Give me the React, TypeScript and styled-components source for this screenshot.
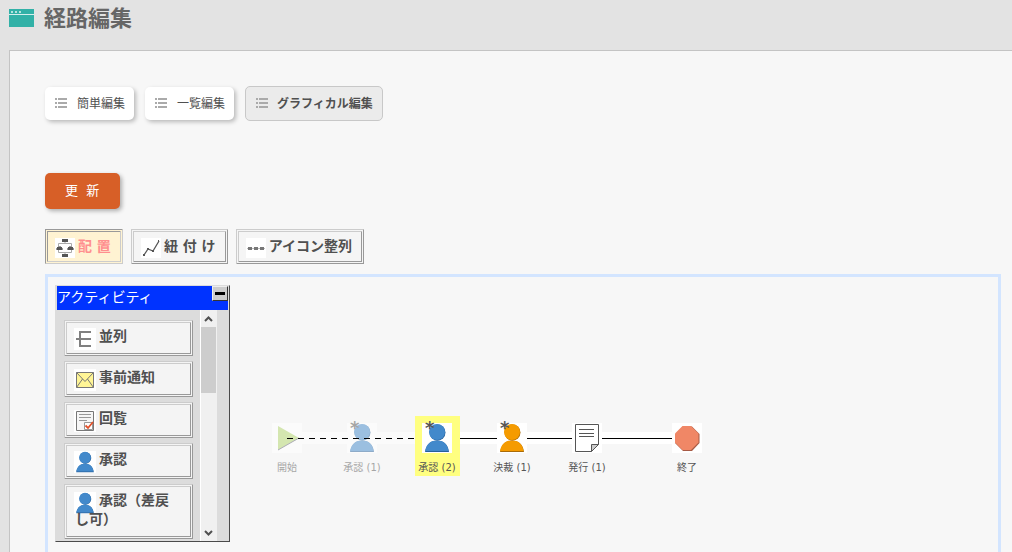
import React from 'react';
import styled, { createGlobalStyle, css } from 'styled-components';

const GlobalStyle = createGlobalStyle`
  * { box-sizing: border-box; }
  body {
    margin: 0;
    background: #e3e3e3;
    color: #505050;
    font-family: 'DejaVu Sans', 'Noto Sans CJK JP', sans-serif;
  }
  button { font-family: inherit; color: inherit; margin: 0; cursor: pointer; }
  svg { display: block; }
`;

const Page = styled.div`
  height: 100vh;
  overflow: hidden;
  display: flex;
  flex-direction: column;
`;

const Header = styled.header`
  display: flex;
  align-items: flex-start;
  gap: 10px;
  height: 50px;
  flex: none;
  padding: 3px 9px 0;
  svg { margin-top: 6px; flex: none; }
`;

const Title = styled.h1`
  margin: 0;
  font-size: 22px;
  line-height: 32px;
  font-weight: bold;
  color: #666;
`;

const Panel = styled.main`
  flex: 1;
  margin-left: 9px;
  padding: 35px 11px 0 35px;
  background: #f7f7f7;
  border: 1px solid #c4c4c4;
  border-width: 1px 0 0 1px;
`;

const Tabs = styled.nav`
  display: flex;
  align-items: center;
  gap: 11px;
  margin-bottom: 52px;
`;

const Tab = styled.button<{ $current?: boolean }>`
  display: flex;
  align-items: center;
  gap: 10px;
  height: 33px;
  padding: 0 9px 0 10px;
  border: 0;
  border-radius: 5px;
  background: #fff;
  box-shadow: 2px 2px 4px rgba(0, 0, 0, 0.25);
  font-size: 12px;
  line-height: 18px;
  ${(p) => p.$current && css`
    height: 35px;
    gap: 9px;
    border: 1px solid #c8c8c8;
    background: #ebebeb;
    box-shadow: none;
    font-weight: bold;
  `}
`;

const UpdateButton = styled.button`
  display: block;
  height: 36px;
  padding: 0 21px 0 20px;
  border: 0;
  border-radius: 5px;
  background: #d75f27;
  color: #fff;
  box-shadow: 2px 2px 4px rgba(0, 0, 0, 0.3);
  font-size: 13px;
  line-height: 20px;
  white-space: pre;
`;

const Toolbar = styled.div`
  display: flex;
  gap: 8px;
  margin: 20px 0 10px;
`;

const ToolButton = styled.button<{ $pressed?: boolean }>`
  display: flex;
  align-items: center;
  gap: 3px;
  height: 35px;
  padding: 0 9px 2px 7px;
  border: 3px double;
  border-color: ${(p) => (p.$pressed ? '#999 #ccc #ccc #999' : '#ccc #999 #999 #ccc')};
  background: ${(p) => (p.$pressed ? '#fff3d2' : '#f5f5f5')};
  color: ${(p) => (p.$pressed ? '#ff8f8f' : '#505050')};
  font-size: 14px;
  line-height: 20px;
  font-weight: bold;
  svg { background: #fff; margin-top: 4px; }
`;

const Canvas = styled.section`
  position: relative;
  min-height: 400px;
  border: 3px solid #d3e5ff;
`;

const Palette = styled.aside`
  position: absolute;
  left: 7px;
  top: 8px;
  width: 175px;
  border: 1px solid;
  border-color: #dcdcdc #4a4a4a #4a4a4a #dcdcdc;
  background: #dcdcdc;
`;

const PaletteBar = styled.div`
  display: flex;
  justify-content: space-between;
  align-items: flex-start;
  height: 24px;
  margin: 0 1px;
  background: #03f;
  color: #fff;
  font-size: 14px;
  line-height: 22px;
`;

const Minimize = styled.button`
  display: flex;
  align-items: center;
  justify-content: center;
  width: 16px;
  height: 15px;
  padding: 0;
  border: 1px solid;
  border-color: #eee #333 #333 #eee;
  background: #ccc;
  &::before { content: ''; width: 10px; height: 3px; background: #000; }
`;

const PaletteBody = styled.div`
  display: flex;
  padding: 0 12px 0 8px;
`;

const PaletteItems = styled.div`
  display: flex;
  flex-direction: column;
  gap: 5px;
  flex: 1;
  padding: 10px 7px 2px 0;
`;

const PaletteItem = styled.button`
  position: relative;
  padding: 4px 8px 7px;
  border: 3px double;
  border-color: #ccc #999 #999 #ccc;
  background: #f4f4f4;
  font-size: 14px;
  line-height: 19px;
  font-weight: bold;
  text-align: left;
  svg { position: absolute; left: 7px; top: 5px; background: #fff; }
  span { position: relative; display: block; text-indent: 24px; }
`;

const ScrollBar = styled.div`
  display: flex;
  flex-direction: column;
  width: 17px;
  background: #f0f0f0;
  border-left: 1px solid #fff;
`;

const ScrollArrow = styled.button`
  width: 16px;
  height: 17px;
  padding: 0;
  border: 0;
  background: #f0f0f0;
`;

const ScrollThumb = styled.div`
  width: 15px;
  height: 66px;
  margin-bottom: auto;
  background: #cdcdcd;
`;

const Flow = styled.svg`
  position: absolute;
  left: 239px;
  top: 155px;
`;

const Node = styled.div<{ $x: number; $selected?: boolean; $done?: boolean }>`
  position: absolute;
  left: ${(p) => p.$x}px;
  top: 139px;
  width: 45px;
  height: 60px;
  padding: 7px 1px 0 0;
  display: flex;
  flex-direction: column;
  align-items: center;
  gap: 7px;
  font-size: 10px;
  line-height: 16px;
  color: #555;
  white-space: nowrap;
  background: ${(p) => (p.$selected ? '#ffff80' : 'transparent')};
  opacity: ${(p) => (p.$done ? 0.5 : 1)};
  svg { background: #fff; flex: none; }
`;

const Mark = styled.span`
  position: absolute;
  left: 10px;
  top: 2px;
  font-size: 18px;
  font-weight: bold;
  line-height: 20px;
  color: #555;
`;

const ListIcon = () => (
  <svg width="12" height="11" viewBox="0 0 12 11" fill="#aaa">
    <path d="M0 0h2v2H0zM3 0h9v2H3zM0 4h2v2H0zM3 4h9v2H3zM0 8h2v2H0zM3 8h9v2H3z" />
  </svg>
);

const WindowIcon = () => (
  <svg width="25" height="18" viewBox="0 0 25 18">
    <path d="M0 0h25v18H0z" fill="#32b1a7" />
    <path d="M0 5h25v1H0z" fill="#d5efed" />
    <path d="M2 2h2v2H2zM6 2h2v2H6zM10 2h2v2h-2z" fill="#b5e2de" />
  </svg>
);

const PlaceIcon = () => (
  <svg width="20" height="20" viewBox="0 0 20 20">
    <path d="M3.500 8V5.500h13V8M3.500 12v2.500h13V12M10 4v2M10 14v2" fill="none" stroke="#aaa" />
    <path d="M7 1h6v3H7zM7 16h6v3H7zM2 9h5v3H2zM13 9h5v3h-5z" fill="#555" />
    <path d="M1 10h1v2H1zM7 10h1v2H7zM12 10h1v2h-1zM18 10h1v2h-1zM3 8h3v1H3zM14 8h3v1h-3z" fill="#999" />
  </svg>
);

const LinkIcon = () => (
  <svg width="20" height="20" viewBox="0 0 20 20" fill="none" stroke="#555" strokeWidth="1.300">
    <path d="M3 17l4-6 5 2 6-10" />
    <path d="M2 16h2v2H2zM6 10h2v2H6zM11 12h2v2h-2zM17 2h1v2h-1z" fill="#555" stroke="none" />
  </svg>
);

const AlignIcon = () => (
  <svg width="20" height="20" viewBox="0 0 20 20">
    <path d="M1 10.500h18" stroke="#bbb" />
    <path d="M2 9h4v3H2zM8 9h4v3H8zM14 9h4v3h-4z" fill="#777" />
  </svg>
);

const ParallelIcon = () => (
  <svg width="22" height="22" viewBox="0 0 22 22" fill="none" stroke="#808080" strokeWidth="2">
    <path d="M17 4H6v14h11M2 11h15" />
  </svg>
);

const MailIcon = () => (
  <svg width="22" height="22" viewBox="0 0 22 22" fill="#fff596" stroke="#777">
    <path d="M2.500 3.500h17v15h-17z" />
    <path d="M2.500 3.500l8.500 9 8.500-9M2.500 18.500l6-8.500M19.500 18.500l-6-8.500" fill="none" />
  </svg>
);

const CirculateIcon = () => (
  <svg width="22" height="22" viewBox="0 0 22 22" fill="none">
    <path d="M2.500 1.500h17v19h-17z" fill="#f6f6f6" stroke="#777" />
    <path d="M5 4.500h12M5 7.500h12M5 10.500h8" stroke="#999" />
    <path d="M10.500 12.500h8v7h-8z" fill="#fff" stroke="#999" />
    <path d="M11.500 15.500l2.500 2.500 5-6" stroke="#e2512a" strokeWidth="1.800" />
  </svg>
);

const PersonIcon = ({ size, color, edge }: { size: number; color: string; edge: string }) => (
  <svg width={size} height={size} viewBox="0 0 30 30">
    <path d="M3 29C4.500 21 9 17.500 15 17.500S26 21 27 29z" fill={edge} />
    <path d="M3 28C4.500 20.500 9 17.500 15 17.500S25.500 20.500 26.500 28z" fill={color} />
    <circle cx="15.500" cy="9.500" r="8" fill={edge} />
    <circle cx="15" cy="9" r="8" fill={color} />
  </svg>
);

const BluePerson = ({ size }: { size: number }) => <PersonIcon size={size} color="#4289cb" edge="#28619a" />;

const StartIcon = () => (
  <svg width="30" height="30" viewBox="0 0 30 30">
    <path d="M6 3l21 12L6 27z" fill="#b2d66c" />
    <path d="M27 15L6 27" stroke="#667" fill="none" />
  </svg>
);

const IssueIcon = () => (
  <svg width="30" height="30" viewBox="0 0 30 30" fill="none" stroke="#555">
    <path d="M3.500 1.500h23v20l-7 7h-16z" fill="#fff" />
    <path d="M19.500 28.500v-7h7z" fill="#ccc" />
    <path d="M7 6.500h15M7 10.500h15M7 13.500h15" />
  </svg>
);

const EndIcon = () => (
  <svg width="30" height="30" viewBox="0 0 30 30">
    <path d="M11 3.500h9l7.500 7.500v9L20 28h-9l-7.500-7.500V11z" fill="#a75a45" />
    <path d="M10.500 3h8.500l7.500 7.500v9L19 27h-8.500L3 19.500v-9z" fill="#f08766" />
  </svg>
);

const paletteItems = [
  { label: '並列', icon: <ParallelIcon /> },
  { label: '事前通知', icon: <MailIcon /> },
  { label: '回覧', icon: <CirculateIcon /> },
  { label: '承認', icon: <BluePerson size={22} /> },
  { label: '承認（差戻し可）', icon: <BluePerson size={22} /> },
];

const nodes = [
  { x: 217, label: '開始', icon: <StartIcon />, done: true },
  { x: 292, label: '承認 (1)', icon: <BluePerson size={30} />, done: true, mark: true },
  { x: 367, label: '承認 (2)', icon: <BluePerson size={30} />, selected: true, mark: true },
  { x: 442, label: '決裁 (1)', icon: <PersonIcon size={30} color="#f59b00" edge="#a96b08" />, mark: true },
  { x: 517, label: '発行 (1)', icon: <IssueIcon /> },
  { x: 617, label: '終了', icon: <EndIcon /> },
];

const renderNode = (n: (typeof nodes)[number]) => (
  <Node key={n.x} $x={n.x} $selected={n.selected} $done={n.done}>
    {n.icon}
    {n.mark && <Mark>*</Mark>}
    <span>{n.label}</span>
  </Node>
);

export default function App() {
  return (
    <Page>
      <GlobalStyle />
      <Header>
        <WindowIcon />
        <Title>経路編集</Title>
      </Header>
      <Panel>
        <Tabs>
          <Tab><ListIcon />簡単編集</Tab>
          <Tab><ListIcon />一覧編集</Tab>
          <Tab $current><ListIcon />グラフィカル編集</Tab>
        </Tabs>
        <UpdateButton>{'更  新'}</UpdateButton>
        <Toolbar>
          <ToolButton $pressed><PlaceIcon />配 置</ToolButton>
          <ToolButton><LinkIcon />紐 付 け</ToolButton>
          <ToolButton><AlignIcon />アイコン整列</ToolButton>
        </Toolbar>
        <Canvas>
          {nodes.filter((n) => n.done).map(renderNode)}
          <Flow width="400" height="12" viewBox="0 0 400 12">
            <path d="M15 6h45M90 6h45" stroke="#fff" strokeWidth="12" opacity="0.5" />
            <path d="M165 6h220" stroke="#fff" strokeWidth="12" />
            <path d="M0 6.500h135" stroke="#000" strokeDasharray="6 5" />
            <path d="M165 6.500h220" stroke="#000" />
          </Flow>
          {nodes.filter((n) => !n.done).map(renderNode)}
          <Palette>
            <PaletteBar>
              アクティビティ
              <Minimize aria-label="最小化" />
            </PaletteBar>
            <PaletteBody>
              <PaletteItems>
                {paletteItems.map((item) => (
                  <PaletteItem key={item.label}>
                    {item.icon}
                    <span>{item.label}</span>
                  </PaletteItem>
                ))}
              </PaletteItems>
              <ScrollBar>
                <ScrollArrow aria-label="上へ">
                  <svg width="16" height="17" viewBox="0 0 16 17" fill="none" stroke="#505050" strokeWidth="2">
                    <path d="M4 11l3.500-3.500L11 11" />
                  </svg>
                </ScrollArrow>
                <ScrollThumb />
                <ScrollArrow aria-label="下へ">
                  <svg width="16" height="17" viewBox="0 0 16 17" fill="none" stroke="#505050" strokeWidth="2">
                    <path d="M4 7l3.500 3.500L11 7" />
                  </svg>
                </ScrollArrow>
              </ScrollBar>
            </PaletteBody>
          </Palette>
        </Canvas>
      </Panel>
    </Page>
  );
}
